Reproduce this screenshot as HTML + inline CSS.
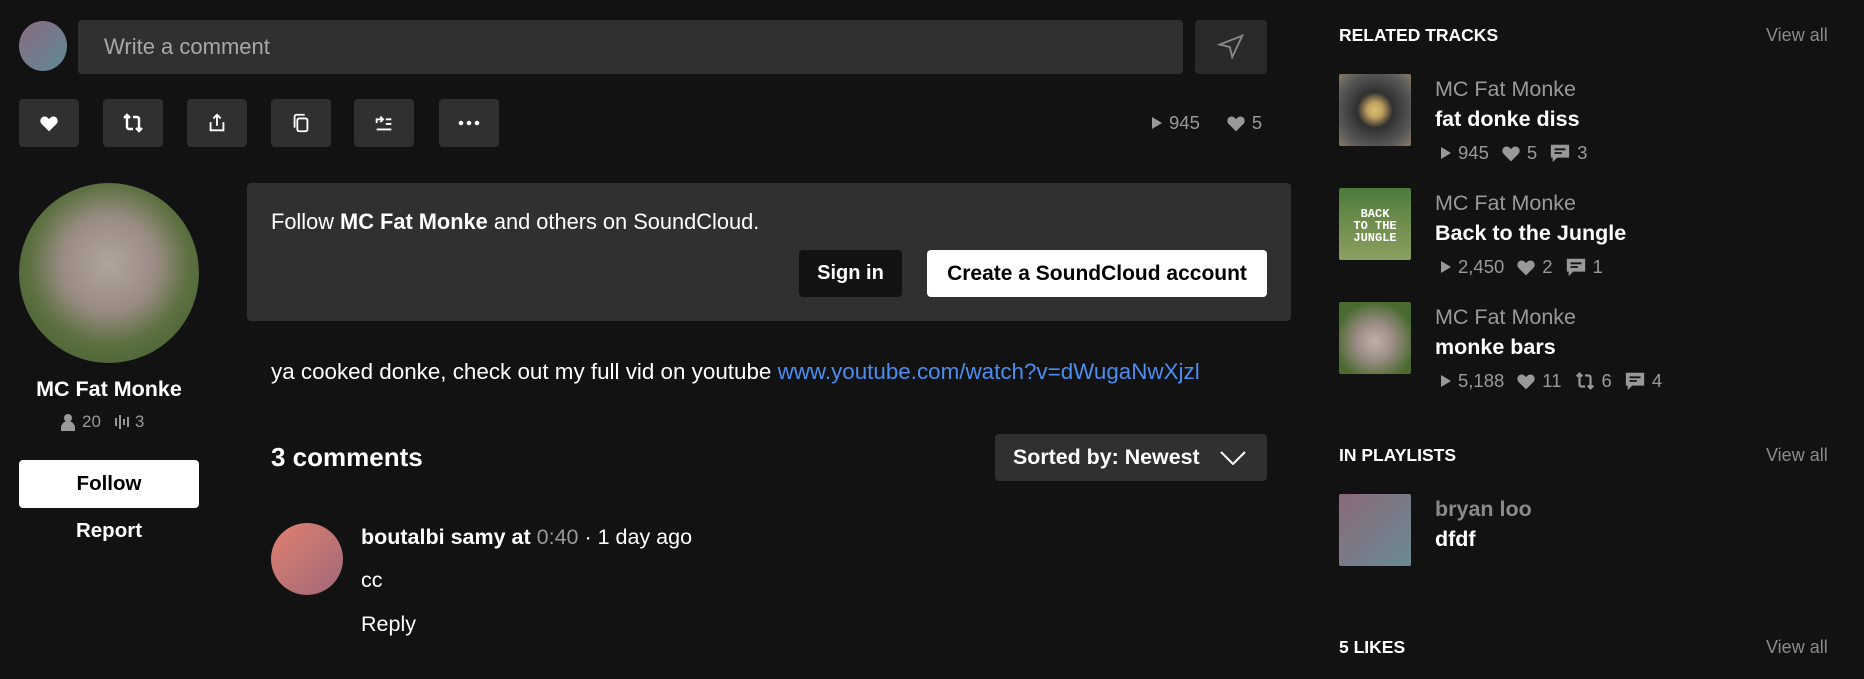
<!DOCTYPE html>
<html><head><meta charset="utf-8"><style>
*{margin:0;padding:0;box-sizing:border-box}
body{width:1864px;height:679px;background:#121212;font-family:"Liberation Sans",sans-serif;color:#fff;position:relative;overflow:hidden}
.a{position:absolute}
.btn{position:absolute;background:#303030;border-radius:4px;display:flex;align-items:center;justify-content:center}
.g{color:#999}
.t{font-size:21.5px;white-space:nowrap}
.st{font-size:18.5px;color:#999;display:flex;align-items:center;gap:6px;white-space:nowrap}
.st svg{fill:#999}
.h{font-size:17.5px;font-weight:bold}
.va{font-size:18px;color:#8a8a8a}
.img{position:absolute;width:72px;height:72px;border-radius:2px}
</style></head><body>
<svg width="0" height="0" style="position:absolute"><defs>
<symbol id="pl" viewBox="0 0 12 14"><path d="M1 1l10 6-10 6z"/></symbol>
<symbol id="ht" viewBox="0 0 24 24"><path d="M12 22l-9-9a5.2 5.2 0 017.6-7.2L12 7.3l1.4-1.5A5.2 5.2 0 0121 13z"/></symbol>
<symbol id="cm" viewBox="0 0 24 24"><path d="M2 3h20v14H9l-5 5v-5H2z"/><path d="M6 7h12v2H6zM6 11h8v2H6z" fill="#121212"/></symbol>
<symbol id="rp" viewBox="0 0 24 24"><path d="M6 4v12a2 2 0 002 2h4M3 7l3-3 3 3M18 20V8a2 2 0 00-2-2h-4M15 17l3 3 3-3" fill="none" stroke="currentColor" stroke-width="2.4"/></symbol>
</defs></svg>
<div class="a" style="left:19px;top:21px;width:48px;height:50px;border-radius:50%;background:linear-gradient(135deg,#8a6a80,#5f8a94)"></div>
<div class="a" style="left:78px;top:20px;width:1105px;height:54px;background:#303030;border-radius:4px"></div>
<div class="a t" style="left:104px;top:34px;color:#a8a8a8;font-size:22px">Write a comment</div>
<div class="btn" style="left:1195px;top:20px;width:72px;height:54px;background:#2a2a2a"><svg width="30" height="30" viewBox="0 0 24 24" fill="none" stroke="#888" stroke-width="1.5"><path d="M21 3L3 10l8 2 2 8z"/></svg></div>

<div class="btn" style="left:19px;top:99px;width:60px;height:48px"><svg width="20" height="20" viewBox="0 0 24 24" fill="#fff"><use href="#ht"/></svg></div>
<div class="btn" style="left:103px;top:99px;width:60px;height:48px;color:#fff"><svg width="24" height="24"><use href="#rp"/></svg></div>
<div class="btn" style="left:187px;top:99px;width:60px;height:48px"><svg width="22" height="22" viewBox="0 0 24 24" fill="none" stroke="#fff" stroke-width="2"><path d="M12 3v12M8 7l4-4 4 4M5 11v9h14v-9"/></svg></div>
<div class="btn" style="left:271px;top:99px;width:60px;height:48px"><svg width="22" height="22" viewBox="0 0 24 24" fill="none" stroke="#fff" stroke-width="2"><rect x="8" y="7" width="11" height="14" rx="2"/><path d="M5 17V5a2 2 0 012-2h9"/></svg></div>
<div class="btn" style="left:354px;top:99px;width:60px;height:48px"><svg width="22" height="22" viewBox="0 0 24 24" fill="none" stroke="#fff" stroke-width="2"><path d="M4 12V8h6M8 5l3 3-3 3M14 8h6M14 13h6M4 19h16"/></svg></div>
<div class="btn" style="left:439px;top:99px;width:60px;height:48px"><svg width="22" height="6" viewBox="0 0 22 6" fill="#fff"><circle cx="3" cy="3" r="2.3"/><circle cx="11" cy="3" r="2.3"/><circle cx="19" cy="3" r="2.3"/></svg></div>
<div class="a st" style="left:1151px;top:112px;gap:6px"><svg width="12" height="14"><use href="#pl"/></svg>945<svg style="margin-left:20px" width="20" height="20"><use href="#ht"/></svg>5</div>

<div class="a" style="left:19px;top:183px;width:180px;height:180px;border-radius:50%;background:radial-gradient(circle at 50% 45%,#b0a49c 0,#9a8c84 35%,#5c7040 60%,#3c5a2a 100%)"></div>
<div class="a" style="left:19px;top:377px;width:180px;text-align:center;font-size:21.5px;font-weight:bold">MC Fat Monke</div>
<div class="a st" style="left:60px;top:412px;font-size:17px"><svg width="16" height="18" viewBox="0 0 16 18"><circle cx="8" cy="5" r="4"/><path d="M1 18v-3a6 6 0 0114 0v3z"/></svg>20<svg style="margin-left:8px" width="14" height="18" viewBox="0 0 14 18"><rect x="0" y="5" width="2" height="8"/><rect x="4" y="2" width="2" height="14"/><rect x="8" y="6" width="2" height="6"/><rect x="12" y="4" width="2" height="10"/></svg>3</div>
<div class="a" style="left:19px;top:460px;width:180px;height:48px;background:#fff;border-radius:4px;color:#000;font-size:20.5px;font-weight:bold;display:flex;align-items:center;justify-content:center">Follow</div>
<div class="a" style="left:19px;top:519px;width:180px;text-align:center;font-size:20.5px;font-weight:bold">Report</div>

<div class="a" style="left:247px;top:183px;width:1044px;height:138px;background:#303030;border-radius:4px"></div>
<div class="a t" style="left:271px;top:209px;font-size:21.8px">Follow <b>MC Fat Monke</b> and others on SoundCloud.</div>
<div class="a" style="left:799px;top:250px;width:103px;height:47px;background:#121212;border-radius:4px;font-size:20px;font-weight:bold;display:flex;align-items:center;justify-content:center">Sign in</div>
<div class="a" style="left:927px;top:250px;width:340px;height:47px;background:#fff;color:#000;border-radius:4px;font-size:21px;font-weight:bold;display:flex;align-items:center;justify-content:center">Create a SoundCloud account</div>

<div class="a t" style="left:271px;top:359px;font-size:22.4px">ya cooked donke, check out my full vid on youtube <span style="color:#4b8df0">www.youtube.com/watch?v=dWugaNwXjzl</span></div>
<div class="a" style="left:271px;top:442px;font-size:26px;font-weight:bold">3 comments</div>
<div class="a" style="left:995px;top:434px;width:272px;height:47px;background:#303030;border-radius:4px;font-size:21.4px;font-weight:bold;display:flex;align-items:center;padding-left:18px;gap:20px">Sorted by: Newest<svg width="26" height="14" viewBox="0 0 26 14" fill="none" stroke="#fff" stroke-width="2"><path d="M1 1l12 12L25 1"/></svg></div>

<div class="a" style="left:271px;top:523px;width:72px;height:72px;border-radius:50%;background:linear-gradient(135deg,#e08070,#a06878)"></div>
<div class="a t" style="left:361px;top:525px"><b>boutalbi samy at</b> <span style="color:#999">0:40</span> · 1 day ago</div>
<div class="a t" style="left:361px;top:568px">cc</div>
<div class="a t" style="left:361px;top:612px">Reply</div>

<div class="a h" style="left:1339px;top:25px">RELATED TRACKS</div>
<div class="a va" style="left:1766px;top:25px">View all</div>

<div class="img" style="left:1339px;top:74px;background:radial-gradient(circle,#d8c070 0,#c0a060 15%,#303030 35%,#5a5a5a 75%,#8a7a60 100%)"></div>
<div class="a t g" style="left:1435px;top:77px;font-size:21.5px">MC Fat Monke</div>
<div class="a t" style="left:1435px;top:107px;font-size:21.5px;font-weight:bold">fat donke diss</div>
<div class="a st" style="left:1440px;top:142px"><svg width="12" height="14"><use href="#pl"/></svg>945<svg style="margin-left:6px" width="20" height="20"><use href="#ht"/></svg>5<svg style="margin-left:6px" width="22" height="22"><use href="#cm"/></svg>3</div>

<div class="img" style="left:1339px;top:188px;background:linear-gradient(#4a7a3a,#6a8a4a 40%,#8aa060)"><div style="color:#fff;font:bold 12px 'Liberation Mono',monospace;text-align:center;margin-top:20px;line-height:12px">BACK<br>TO THE<br>JUNGLE</div></div>
<div class="a t g" style="left:1435px;top:191px;font-size:21.5px">MC Fat Monke</div>
<div class="a t" style="left:1435px;top:221px;font-size:21.5px;font-weight:bold">Back to the Jungle</div>
<div class="a st" style="left:1440px;top:256px"><svg width="12" height="14"><use href="#pl"/></svg>2,450<svg style="margin-left:6px" width="20" height="20"><use href="#ht"/></svg>2<svg style="margin-left:6px" width="22" height="22"><use href="#cm"/></svg>1</div>

<div class="img" style="left:1339px;top:302px;background:radial-gradient(circle at 50% 55%,#c0b0a8 0,#9a8c84 35%,#4a6a30 75%)"></div>
<div class="a t g" style="left:1435px;top:305px;font-size:21.5px">MC Fat Monke</div>
<div class="a t" style="left:1435px;top:335px;font-size:21.5px;font-weight:bold">monke bars</div>
<div class="a st" style="left:1440px;top:370px"><svg width="12" height="14"><use href="#pl"/></svg>5,188<svg style="margin-left:6px" width="20" height="20"><use href="#ht"/></svg>11<svg style="margin-left:6px" width="22" height="22"><use href="#rp"/></svg>6<svg style="margin-left:6px" width="22" height="22"><use href="#cm"/></svg>4</div>

<div class="a h" style="left:1339px;top:445px">IN PLAYLISTS</div>
<div class="a va" style="left:1766px;top:445px">View all</div>
<div class="img" style="left:1339px;top:494px;background:linear-gradient(135deg,#8a6a7a,#6a8a94)"></div>
<div class="a t g" style="left:1435px;top:497px;font-size:21.5px;font-weight:bold;color:#8a8a8a">bryan loo</div>
<div class="a t" style="left:1435px;top:527px;font-size:21.5px;font-weight:bold">dfdf</div>

<div class="a h" style="left:1339px;top:637px">5 LIKES</div>
<div class="a va" style="left:1766px;top:637px">View all</div>
</body></html>
